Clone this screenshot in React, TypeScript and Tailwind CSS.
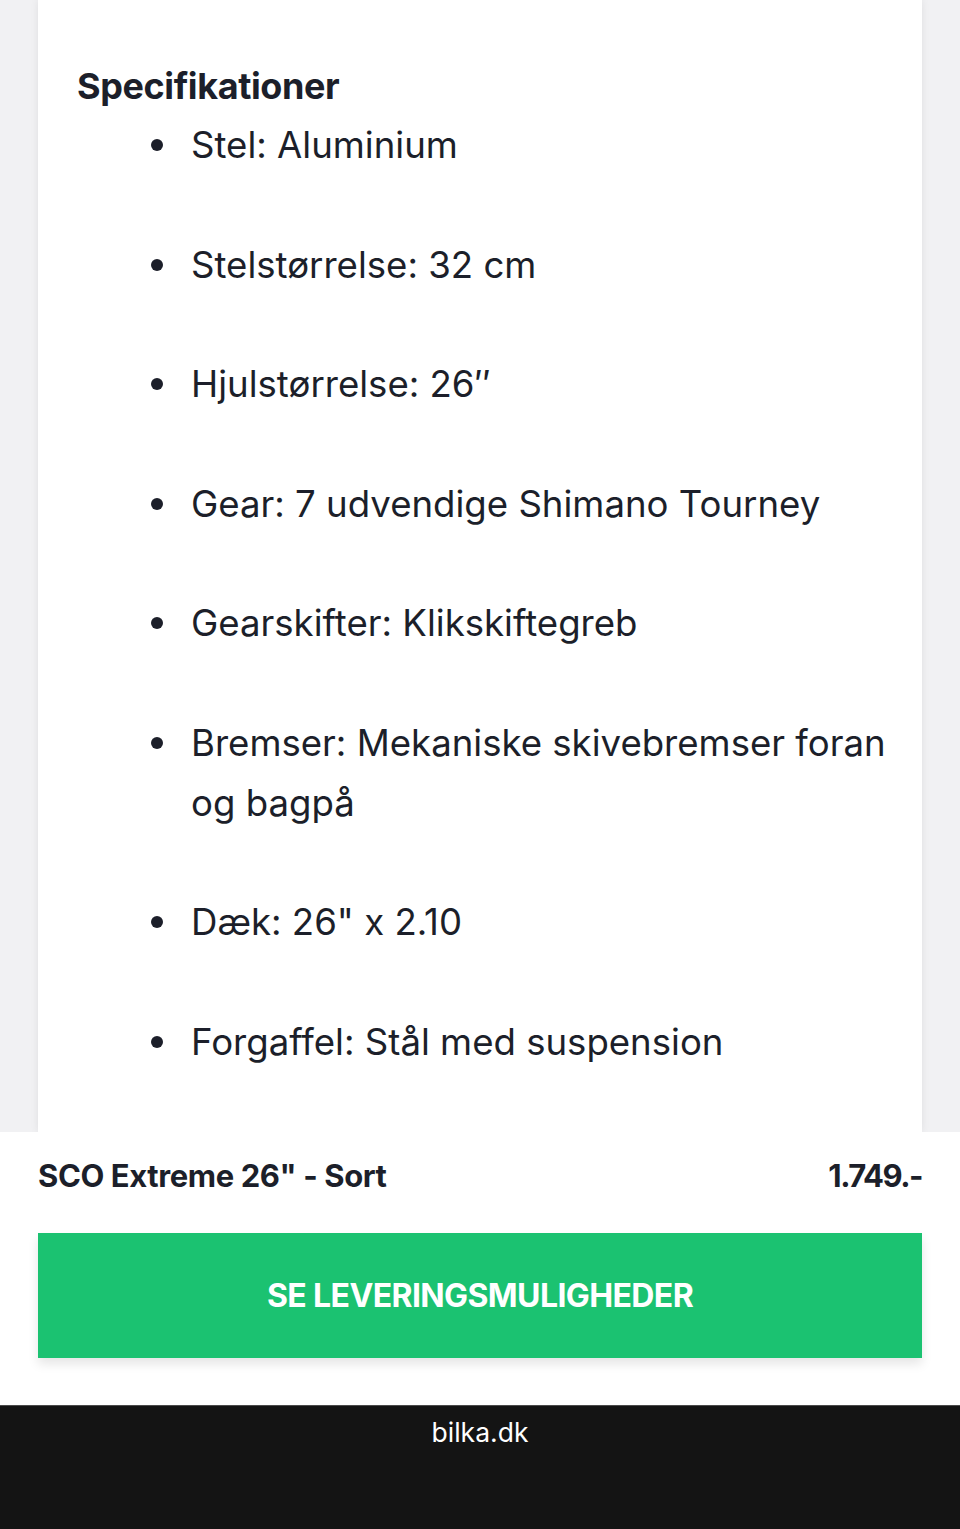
import React from 'react';

const specs: string[] = [
  'Stel: Aluminium',
  'Stelstørrelse: 32 cm',
  'Hjulstørrelse: 26″',
  'Gear: 7 udvendige Shimano Tourney',
  'Gearskifter: Klikskiftegreb',
  'Bremser: Mekaniske skivebremser foran og bagpå',
  'Dæk: 26" x 2.10',
  'Forgaffel: Stål med suspension',
];

const SpecList: React.FC = () => (
  <ul className="mt-[9px] flex flex-col gap-[59.5px]">
    {specs.map((s) => (
      <li key={s} className="flex items-start text-[36.6px] leading-[60px] text-[#1c1f2a]">
        <span className="ml-[74px] mt-[24px] h-[12px] w-[12px] shrink-0 rounded-full bg-[#1c1f2a]" />
        <span className="ml-[28px]">{s}</span>
      </li>
    ))}
  </ul>
);

export default function App() {
  return (
    <div className="min-h-screen bg-[#f1f1f3] font-['Inter',sans-serif]">
      {/* product description card */}
      <div className="px-[38px]">
        <div className="h-[1132px] overflow-hidden bg-white pl-[39px] pr-[10px] pt-[66px] shadow-[0_0_8px_rgba(0,0,0,0.08)]">
          <h2 className="text-[36px] font-bold leading-[40px] tracking-[-0.4px] text-[#1c1f2a]">
            Specifikationer
          </h2>
          <SpecList />
        </div>
      </div>

      {/* sticky buy bar */}
      <div className="relative h-[273px] bg-white px-[38px] pt-[24px]">
        <div className="flex items-center justify-between text-[#1c1f2a]">
          <span className="text-[31px] font-bold leading-[40px] tracking-[-0.4px]">SCO Extreme 26" - Sort</span>
          <span className="text-[31px] font-bold leading-[40px] tracking-[-1.5px]">1.749.-</span>
        </div>
        <button className="mt-[37px] flex h-[125px] w-full items-center justify-center bg-[#1bc271] shadow-[0_6px_10px_rgba(0,0,0,0.1)]">
          <span className="text-[32px] font-bold tracking-[-0.6px] text-white">SE LEVERINGSMULIGHEDER</span>
        </button>
      </div>

      {/* browser footer */}
      <div className="h-[124px] border-t border-[#4a4a4a] bg-[#141414] pt-[9px] text-center">
        <span className="text-[26.5px] leading-[34px] text-white">bilka.dk</span>
      </div>
    </div>
  );
}
